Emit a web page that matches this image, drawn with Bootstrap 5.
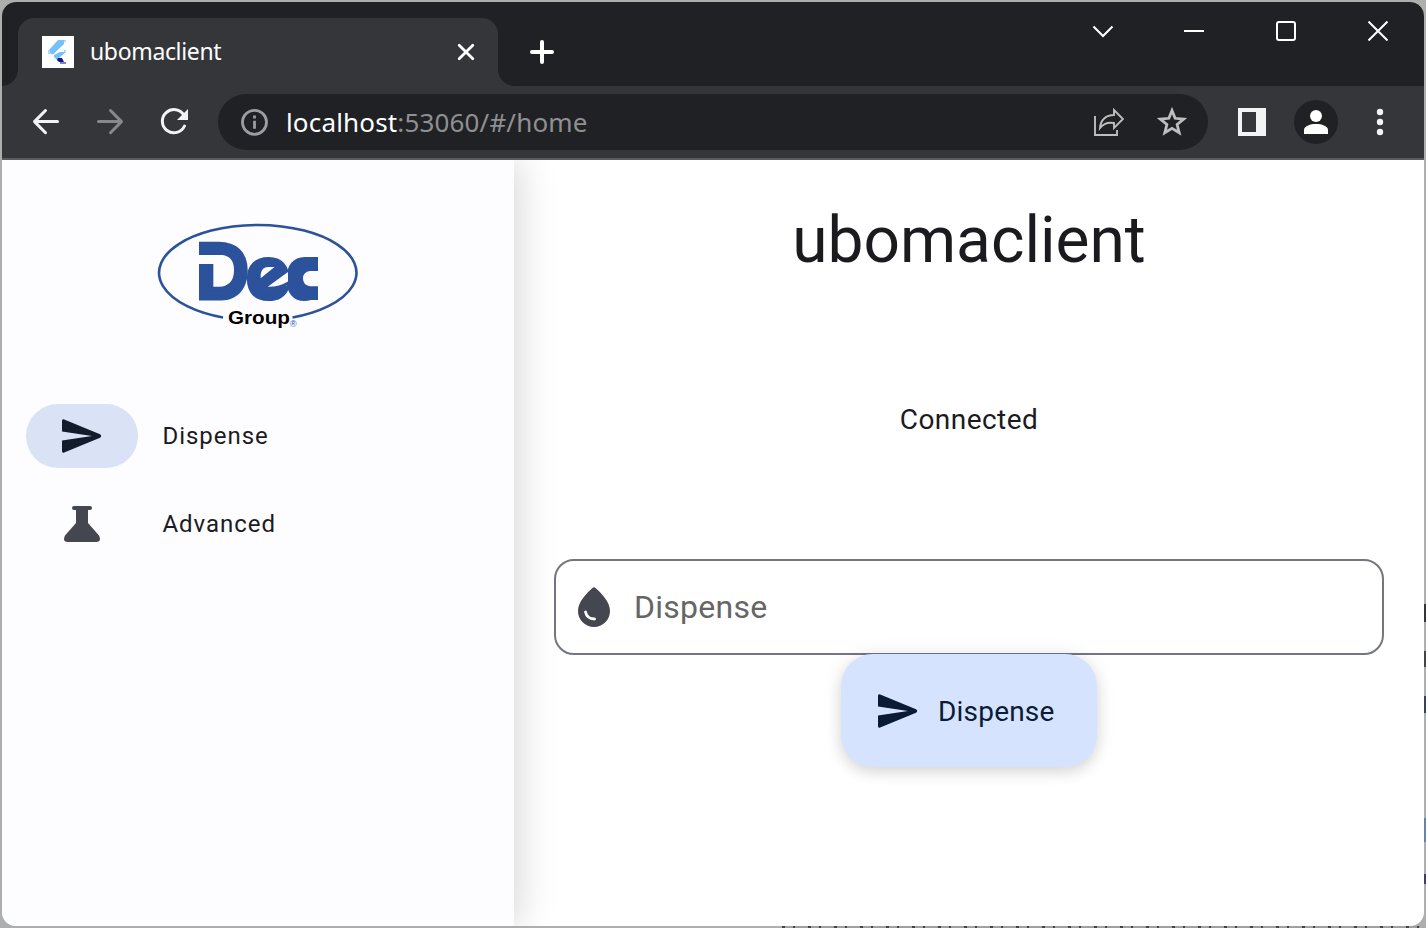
<!DOCTYPE html>
<html lang="en">
<head>
<meta charset="utf-8">
<title>ubomaclient</title>
<link href="https://cdn.jsdelivr.net/npm/bootstrap@5.3.0/dist/css/bootstrap.min.css" rel="stylesheet">
<style>
html,body{height:100%;overflow:hidden}
body{background:#adaeae;padding:2px;font-family:Roboto,sans-serif;color:#1b1b1f;
 background-image:
 linear-gradient(#33343c,#33343c),linear-gradient(#444,#444),linear-gradient(#334456,#334456),linear-gradient(#6584ad,#6584ad),linear-gradient(#35406f,#35406f),
 repeating-linear-gradient(90deg,#444 0 3px,#a0a0a0 3px 11px,#444 11px 13px,#a0a0a0 13px 26px);
 background-size:2px 18px,2px 16px,2px 17px,2px 24px,2px 10px,638px 2px;
 background-position:1424px 604px,1424px 651px,1424px 696px,1424px 818px,1424px 874px,782px 926px;
 background-repeat:no-repeat}
svg{display:block;flex-shrink:0}
.window{border-radius:14px;background:#fff}
.tabstrip{height:84px;background:#202124}
.tab{width:480px;height:68px;margin:16px 0 0 16px;background:#35363a;border-radius:16px 16px 0 0;padding:0 22px 0 24px;position:relative}
.tab::before,.tab::after{content:"";position:absolute;bottom:0;width:16px;height:16px}
.tab::before{left:-16px;background:radial-gradient(circle at 0 0,transparent 15.5px,#35363a 16px)}
.tab::after{right:-16px;background:radial-gradient(circle at 100% 0,transparent 15.5px,#35363a 16px)}
.tabname,.address{font-family:"Noto Sans",sans-serif;white-space:nowrap}
.tabname{font-size:23px;letter-spacing:-.35px;color:#fff;margin:0 0 2px 16px}
.plus{margin:38px 0 0 32px}
.controls{margin-right:36px;height:58px;gap:72px}
.toolbar{height:74px;background:#35363a;border-bottom:2px solid #5b5c60;padding:0 30px}
.address{width:990px;height:56px;background:#202124;border-radius:28px;padding:0 20px 0 22px;margin-left:28px;font-size:26px;letter-spacing:.16px;color:#8f9092}
.url{margin:1px 0 0 18px}
.gap-icon{margin-left:36px}
.star{margin-left:32px}
.panel{margin-left:30px}
.avatar{width:44px;height:44px;background:#202124;margin:0 38px 0 28px}
.side{width:512px;background:#fdfcff;box-shadow:4px 0 36px rgba(0,0,0,.17);padding:63px 24px 0;z-index:1}
.side .logo{margin:0 auto 76px 131px}
.item{height:64px;margin-bottom:24px;font-size:24px;letter-spacing:.95px}
.pill{width:112px;height:64px;border-radius:32px;margin-right:24.500px;color:#44474f}
.pill.on{background:#dae2f5;color:#131c2b;padding-right:2px}
.content{padding:0 40px}
h1{font-size:64px;line-height:76px;margin:43px 0 0;font-weight:400}
.status{font-size:28px;line-height:40px;margin-top:121px;letter-spacing:.45px}
.field{height:96px;width:830px;margin-top:119px;border:2px solid #74777f;border-radius:20px;padding-left:22px;font-size:32px;letter-spacing:.25px;color:#666}
.field span{margin-left:24px}
.send{width:256px;height:113px;border:0;border-radius:32px;background:#d6e3ff;color:#0a1b36;font-size:28px;letter-spacing:.2px;padding:1px 0 0 32px;margin-top:-1px;box-shadow:0 6px 14px rgba(0,0,0,.1),0 1px 20px rgba(0,0,0,.09)}
.send span{margin:1px 0 0 17px}
</style>
</head>
<body>
<svg width="0" height="0" class="position-absolute"><defs>
<symbol id="send" viewBox="0 0 40 34"><path d="M1 2Q1-.3 3.200.6L39 15.300Q41.500 17 39 18.700L3.200 33.400Q1 34.300 1 32V21.500L31 17 1 12.500Z" fill="currentColor"/></symbol>
<clipPath id="logoclip"><path d="M42 0h119v105H42z"/></clipPath>
</defs></svg>
<div class="window h-100 d-flex flex-column overflow-hidden">
 <header class="tabstrip d-flex flex-shrink-0">
  <div class="tab d-flex align-items-center">
   <svg width="32" height="32" viewBox="0 0 32 32"><path fill="#fff" d="M0 0h32v32H0z"/><path fill="#74c0fb" d="M16 4h6v4L11 18.500 7 17v-3ZM18 16h6L17 22l2 2-3 1-4-4v-2Z"/><path fill="#a9dafd" d="M22 4h2v2h-2zM6 14h2v4H6zM22 14h2v2h-2z"/><path fill="#17178b" d="M16 22h4l2 4h-5l-2-2Z"/><path fill="#8088b0" d="M18 26h6v2h-6z"/></svg>
   <span class="tabname">ubomaclient</span>
   <svg class="ms-auto" width="20" height="20" viewBox="0 0 20 20" stroke="#fff" stroke-width="2.800" stroke-linecap="round"><path d="M3.200 3.200l13.600 13.600M16.800 3.200L3.200 16.800"/></svg>
  </div>
  <svg class="plus" width="24" height="24" viewBox="0 0 24 24" stroke="#fff" stroke-width="4" stroke-linecap="round"><path d="M12 2v20M2 12h20"/></svg>
  <div class="controls ms-auto d-flex align-items-center">
   <svg class="overflow-visible" width="20" height="20" viewBox="0 0 20 20" fill="none" stroke="#fff" stroke-width="2"><path d="M1.500 5.500l9.500 9.500 9.500-9.500"/></svg>
   <svg width="20" height="20" viewBox="0 0 20 20"><path fill="#fff" d="M0 9h20v2H0z"/></svg>
   <svg width="20" height="20" viewBox="0 0 20 20" fill="none" stroke="#fff" stroke-width="2"><rect x="1" y="1" width="18" height="18" rx="2"/></svg>
   <svg width="20" height="20" viewBox="0 0 20 20" stroke="#fff" stroke-width="2"><path d="M.5.5l19 19M19.500.5l-19 19"/></svg>
  </div>
 </header>
 <nav class="toolbar d-flex align-items-center flex-shrink-0">
  <svg width="28" height="28" viewBox="0 0 28 28" fill="none" stroke="#f1f3f4" stroke-width="3" stroke-linecap="round" stroke-linejoin="round"><path d="M25.500 13.600H2.500M13.500 2.500L2.500 13.600l11 11.100"/></svg>
  <svg class="gap-icon" width="28" height="28" viewBox="0 0 28 28" fill="none" stroke="#87888b" stroke-width="3" stroke-linecap="round" stroke-linejoin="round"><path d="M2.500 13.600h23M14.500 2.500l11 11.100-11 11.100"/></svg>
  <svg class="gap-icon" width="30" height="28" viewBox="0 0 30 28" fill="none" stroke="#f1f3f4" stroke-width="3"><path d="M24 7.400A11.600 11.600 0 1 0 24.500 18" stroke-linecap="round"/><path d="M28 1v11H17Z" fill="#f1f3f4" stroke="none"/></svg>
  <div class="address d-flex align-items-center">
   <svg width="28" height="28" viewBox="0 0 28 28" fill="none" stroke="#9c9da4" stroke-width="2.800"><circle cx="14.500" cy="14.300" r="12"/><path d="M14.500 12.800v8M14.500 7.500v3"/></svg>
   <span class="url"><span class="text-white">localhost</span>:53060/#/home</span>
   <svg class="ms-auto" width="32" height="30" viewBox="0 0 32 30" fill="none" stroke="#bdbebf" stroke-width="1.900"><path d="M3 9v19h22v-5"/><path d="M22 3l9 9-9 9v-5C16 15 11 17 8 21 8.500 13 14 8 22 8Z"/></svg>
   <svg class="star" width="32" height="32" viewBox="0 0 32 32" fill="none" stroke="#bdbebf" stroke-width="2.800"><path d="M16 4.500l3.100 7.800 8.600.7-6.600 5.500 2.100 8.200-7.200-4.400-7.200 4.400L10.900 18.500 4.300 13l8.600-.7Z"/></svg>
  </div>
  <svg class="panel" width="28" height="28" viewBox="0 0 28 28"><path fill="#f1f3f4" fill-rule="evenodd" d="M0 0h28v28H0zM4 4v20h14V4z"/></svg>
  <div class="avatar rounded-circle d-flex align-items-center justify-content-center flex-shrink-0"><svg width="24" height="24" viewBox="0 0 24 24" fill="#fff"><circle cx="12" cy="6" r="6"/><path d="M0 24v-4.500C1 12 23 12 24 19.500V24Z"/></svg></div>
  <svg width="8" height="28" viewBox="0 0 8 28" fill="#f1f3f4"><circle cx="4" cy="4" r="3.200"/><circle cx="4" cy="14" r="3.200"/><circle cx="4" cy="24" r="3.200"/></svg>
 </nav>
 <main class="d-flex flex-grow-1 overflow-hidden">
  <aside class="side flex-shrink-0">
   <svg class="logo" width="202" height="105" viewBox="0 0 202 105" font-family="Liberation Sans, sans-serif" font-weight="700">
    <path d="M66 94.500A98.700 47.800 0 1 1 135.500 94.500" fill="none" stroke="#2b529b" stroke-width="2.600"/>
    <g clip-path="url(#logoclip)">
     <text y="74.500" fill="#2b529b" stroke="#2b529b" stroke-width="5" font-size="78"><tspan x="38.500" textLength="53" lengthAdjust="spacingAndGlyphs">D</tspan><tspan x="89.500" font-size="73" textLength="43" lengthAdjust="spacingAndGlyphs">e</tspan><tspan x="129" font-size="73" textLength="36" lengthAdjust="spacingAndGlyphs">c</tspan></text>
     <!-- solid bowls of the e and the c, then the counters of the three letters -->
     <path fill="#2b529b" d="M99 42h22l9 8v12l-9 7h-21zM142 37q4-3 9-3h10v43h-10q-5 0-9-3z"/>
     <path fill="#fdfcff" d="M41 32H66Q77 34 77 47 77 61 66 62.700H58V41H41ZM103.700 55.300V51Q105 44 111 44H117.500ZM110.700 63.700L131 49V58.500Q122 64 110.700 63.700ZM162 48H153Q146 49 146 55.500 146 62 153 63.300H162Z"/>
    </g>
    <text x="71" y="100.500" font-size="19" textLength="62" lengthAdjust="spacingAndGlyphs">Group</text>
    <text x="133" y="104" font-size="9" font-weight="400" fill="#2b529b">®</text>
   </svg>
   <div class="item d-flex align-items-center"><span class="pill on d-flex align-items-center justify-content-center"><svg width="40" height="34"><use href="#send"/></svg></span>Dispense</div>
   <div class="item d-flex align-items-center"><span class="pill d-flex align-items-center justify-content-center"><svg width="36" height="36" viewBox="0 0 36 36"><path fill="currentColor" d="M10 0h16a2 2 0 0 1 0 4h-2v13l11 12.500Q38 36 32 36H4Q-2 36 1 29.500L12 17V4h-2a2 2 0 0 1 0-4Z"/></svg></span>Advanced</div>
  </aside>
  <section class="content flex-grow-1 d-flex flex-column align-items-center">
   <h1>ubomaclient</h1>
   <div class="status">Connected</div>
   <div class="field d-flex align-items-center flex-shrink-0">
    <svg width="32" height="40" viewBox="0 0 32 40"><path fill="#44474f" d="M14.500 1Q16-.5 17.500 1C24 7 32 15 32 24A16 16 0 0 1 0 24C0 15 8 7 14.500 1Z"/><path d="M7.500 25Q9 32 16.500 32" fill="none" stroke="#fff" stroke-width="2.800" stroke-linecap="round"/></svg>
    <span>Dispense</span>
   </div>
   <button class="send d-flex align-items-center"><svg width="48" height="34"><use href="#send" width="40" height="34" x="4"/></svg><span>Dispense</span></button>
  </section>
 </main>
</div>
<script src="https://cdn.jsdelivr.net/npm/bootstrap@5.3.0/dist/js/bootstrap.bundle.min.js"></script>
</body>
</html>
